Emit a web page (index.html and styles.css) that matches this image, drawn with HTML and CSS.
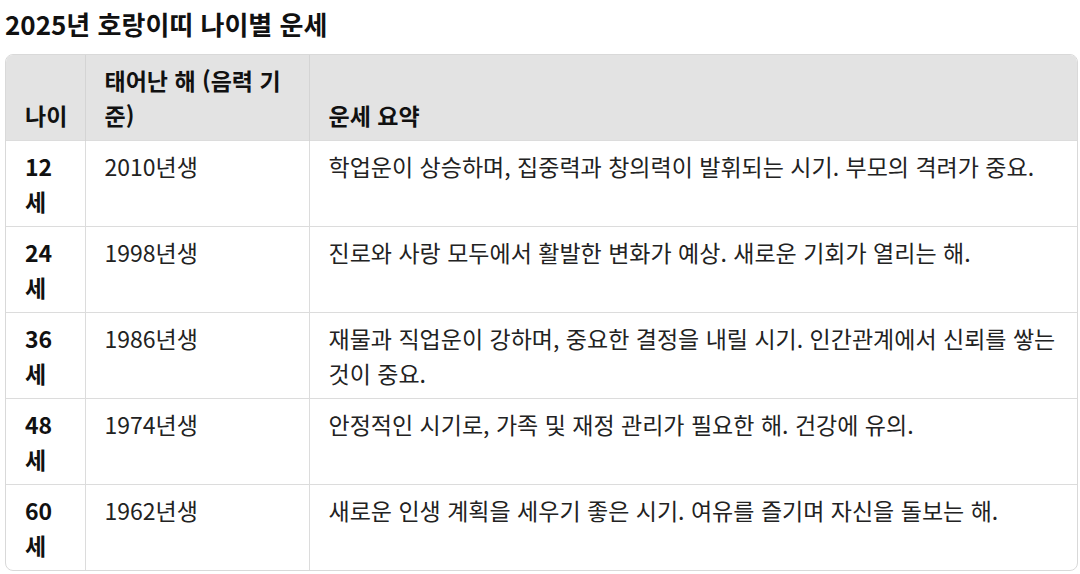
FILE: index.html
```html
<!DOCTYPE html>
<html lang="ko">
<head>
<meta charset="utf-8">
<link rel="stylesheet" href="styles.css">
</head>
<body>
<h3 class="title">2025년 호랑이띠 나이별 운세</h3>
<div class="table-wrap">
<table class="fortune">
<thead>
<tr><th class="c-age">나이</th><th class="c-year">태어난 해 (음력 기준)</th><th class="c-desc">운세 요약</th></tr>
</thead>
<tbody>
<tr><td class="age">12세</td><td>2010년생</td><td>학업운이 상승하며, 집중력과 창의력이 발휘되는 시기. 부모의 격려가 중요.</td></tr>
<tr><td class="age">24세</td><td>1998년생</td><td>진로와 사랑 모두에서 활발한 변화가 예상. 새로운 기회가 열리는 해.</td></tr>
<tr><td class="age">36세</td><td>1986년생</td><td>재물과 직업운이 강하며, 중요한 결정을 내릴 시기. 인간관계에서 신뢰를 쌓는 것이 중요.</td></tr>
<tr><td class="age">48세</td><td>1974년생</td><td>안정적인 시기로, 가족 및 재정 관리가 필요한 해. 건강에 유의.</td></tr>
<tr><td class="age">60세</td><td>1962년생</td><td>새로운 인생 계획을 세우기 좋은 시기. 여유를 즐기며 자신을 돌보는 해.</td></tr>
</tbody>
</table>
</div>
</body>
</html>
```
FILE: styles.css
```css
html, body {
  margin: 0;
  padding: 0;
  background: #ffffff;
}
body {
  padding: 0 2px 0 5px;
  font-family: "Noto Sans CJK KR", "Noto Sans", sans-serif;
  color: #222;
}
.title {
  margin: 0;
  padding-top: 7px;
  height: 54px;
  font-size: 26px;
  font-weight: 700;
  line-height: 34px;
  color: #111;
  box-sizing: border-box;
}
.table-wrap {
  border: 1px solid #d9d9d9;
  border-radius: 8px;
  overflow: hidden;
  width: 1071px;
}
.fortune {
  border-collapse: collapse;
  width: 100%;
  table-layout: fixed;
  font-size: 23px;
  line-height: 35px;
}
.c-age { width: 79px; white-space: nowrap; }
.c-year { width: 224px; }
.fortune th {
  background: #e3e3e3;
  font-weight: 700;
  text-align: left;
  vertical-align: bottom;
  padding: 8px 19px 7px;
  height: 85px;
  box-sizing: border-box;
  color: #111;
  border-left: 1px solid #d4d4d4;
}
.fortune td {
  vertical-align: top;
  padding: 8px 19px 7px;
  height: 85px;
  box-sizing: border-box;
  border-left: 1px solid #dcdcdc;
  border-top: 1px solid #dcdcdc;
  color: #222;
}
.fortune th:first-child, .fortune td:first-child {
  border-left: none;
}
.fortune td.age {
  font-weight: 700;
  color: #111;
}
```
